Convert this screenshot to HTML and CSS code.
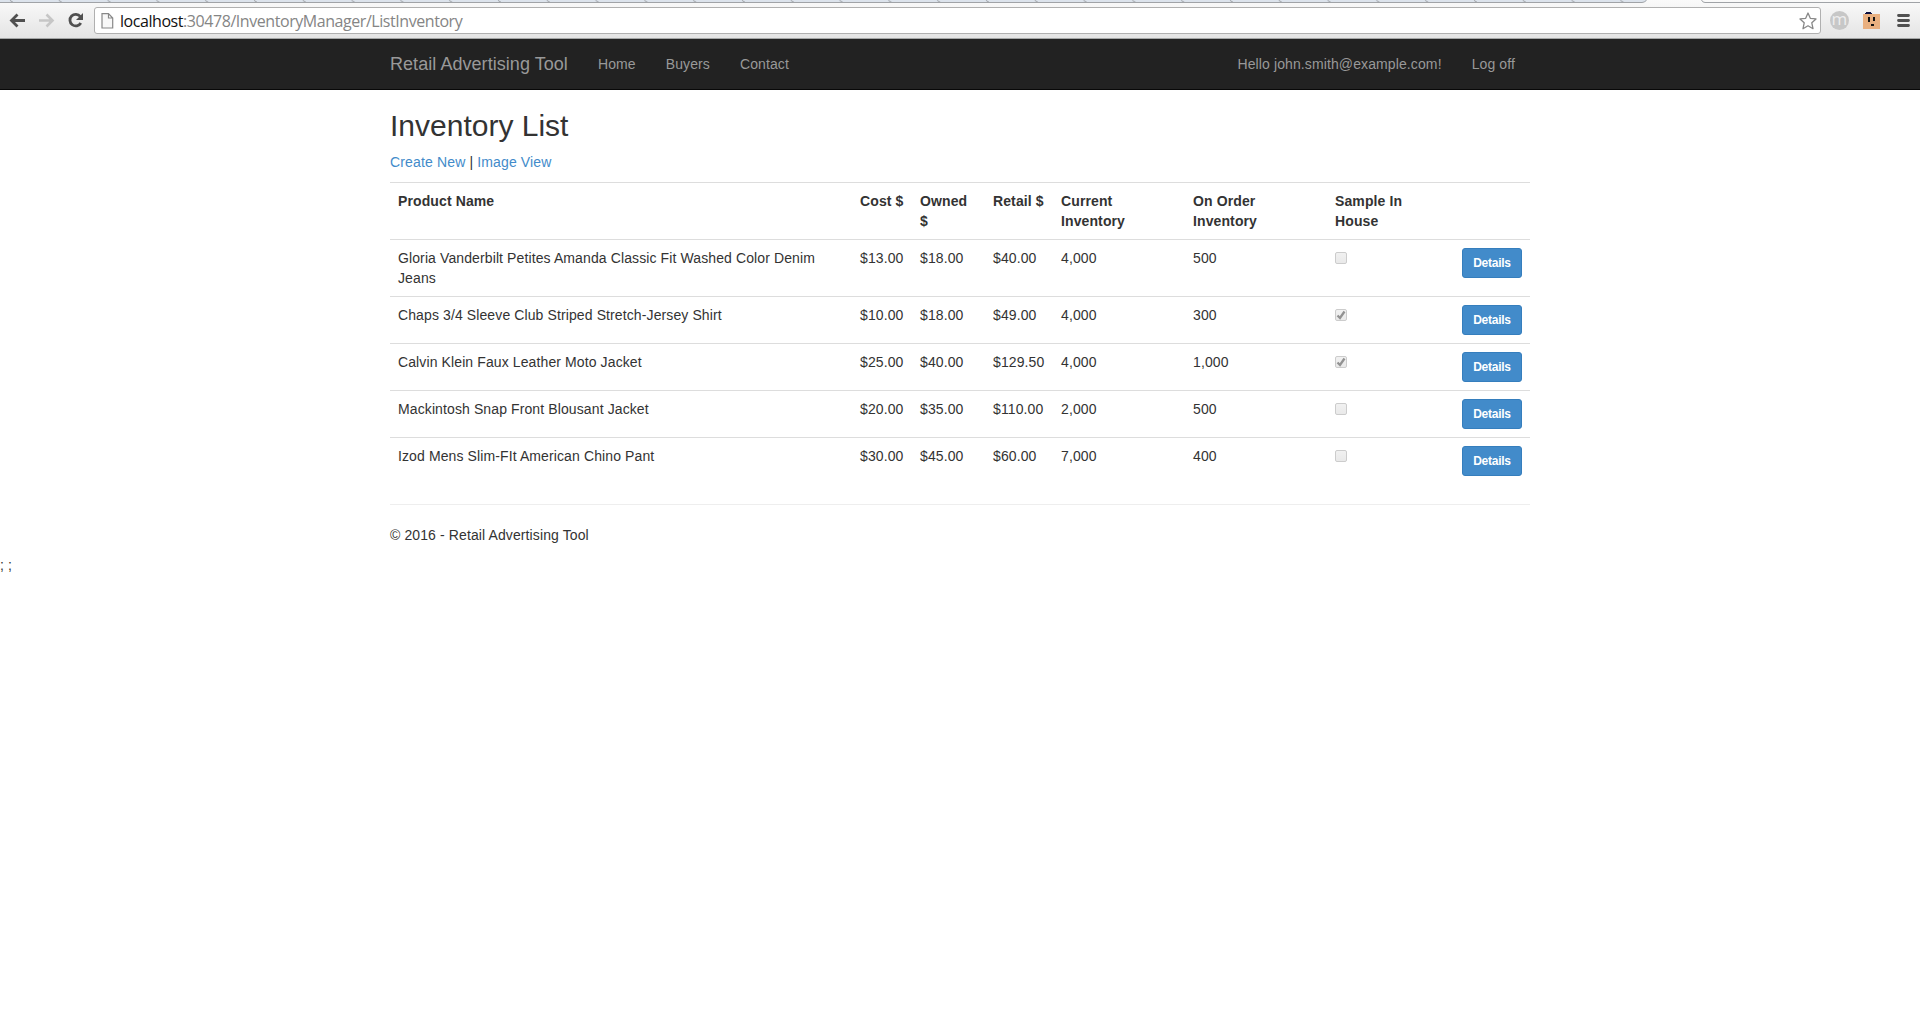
FILE: index.html
```
<!DOCTYPE html>
<html lang="en">
<head>
<meta charset="utf-8">
<title>Inventory List</title>
<link rel="stylesheet" href="styles.css">
</head>
<body>
<header class="browser">
  <svg class="tabs" width="1920" height="8" viewBox="0 0 1920 8">
    <defs><pattern id="tab" x="13" width="48.8" height="8" patternUnits="userSpaceOnUse"><path d="M46 0q1 2 4 2" fill="none" stroke="#a5a9ae"/></pattern></defs>
    <path d="M0 0H1646V2H0z" fill="#dce3ec"/>
    <path d="M0 0H1646V2H0z" fill="url(#tab)"/>
    <path d="M0 2.5H1642Q1645 2.500 1646.500 0M1701.500 0Q1702.500 2.500 1705 2.500H1920" fill="none" stroke="#a0a3a7"/>
  </svg>
  <div class="toolbar">
    <svg class="nav-icon" width="90" height="28" viewBox="0 0 90 28">
      <path d="M25 13.500H12M17.500 7.500L11.500 13.500L17.500 19.500" fill="none" stroke="#505050" stroke-width="2.800"/>
      <path d="M39 13.500H52M46.500 7.500L52.500 13.500L46.500 19.500" fill="none" stroke="#c6c6c6" stroke-width="2.600"/>
      <path d="M80.300 9.500A5.800 5.800 0 1 0 80.800 16" fill="none" stroke="#505050" stroke-width="2.800"/>
      <path d="M83 6V13H76z" fill="#505050"/>
    </svg>
    <div class="address">
      <svg width="13" height="16" viewBox="0 0 13 16"><path d="M1 .7H7.500L11.700 5V15H1zM7.500 .7V5H11.700" fill="#f8f8f8" stroke="#888" stroke-width="1.200"/></svg>
      <span class="url"><b>localhost</b>:30478/InventoryManager/ListInventory</span>
      <svg class="star" width="18" height="18" viewBox="0 0 18 18"><path d="M9 1L11.300 6.300L17 6.900L12.800 10.800L14 16.700L9 13.800L4 16.700L5.200 10.800L1 6.900L6.700 6.300Z" fill="#fff" stroke="#888" stroke-width="1.300" stroke-linejoin="round"/></svg>
    </div>
    <span class="badge">m</span>
    <svg class="face" width="17" height="17" viewBox="0 0 17 17" shape-rendering="crispEdges"><path d="M0 2H17V17H0z" fill="#e9b080"/><path d="M2 1H3V0H8V1H9V2H2z" fill="#0c1040"/><path d="M5 5H7V10H5zM10 5H12V9H10zM8 12H11V14H8z" fill="#111"/></svg>
    <svg class="menu" width="13" height="13" viewBox="0 0 13 13"><path d="M1.500 1.500H11.500M1.500 6.500H11.500M1.500 11.500H11.500" stroke="#505050" stroke-width="2.800" stroke-linecap="round"/></svg>
  </div>
</header>
<nav class="navbar">
  <div class="container nav-row">
    <a class="brand">Retail Advertising Tool</a>
    <a>Home</a><a>Buyers</a><a>Contact</a>
    <a class="user">Hello john.smith@example.com!</a><a>Log off</a>
  </div>
</nav>
<main class="container">
  <h2>Inventory List</h2>
  <p><a class="link">Create New</a> | <a class="link">Image View</a></p>
  <table class="inventory">
    <colgroup><col class="c-name"><col class="c-cost"><col class="c-owned"><col class="c-retail"><col class="c-current"><col class="c-order"><col class="c-sample"><col class="c-action"></colgroup>
    <tr><th>Product Name</th><th>Cost $</th><th>Owned $</th><th>Retail $</th><th>Current<br>Inventory</th><th>On Order<br>Inventory</th><th>Sample In<br>House</th><th></th></tr>
    <tr><td>Gloria Vanderbilt Petites Amanda Classic Fit Washed Color Denim Jeans</td><td>$13.00</td><td>$18.00</td><td>$40.00</td><td>4,000</td><td>500</td><td><span class="check"></span></td><td><a class="btn">Details</a></td></tr>
    <tr><td>Chaps 3/4 Sleeve Club Striped Stretch-Jersey Shirt</td><td>$10.00</td><td>$18.00</td><td>$49.00</td><td>4,000</td><td>300</td><td><span class="check"><svg width="10" height="10" viewBox="0 0 10 10"><path d="M1.500 5.500L4 8L8.500 1.500" fill="none" stroke="#929292" stroke-width="2.300"/></svg></span></td><td><a class="btn">Details</a></td></tr>
    <tr><td>Calvin Klein Faux Leather Moto Jacket</td><td>$25.00</td><td>$40.00</td><td>$129.50</td><td>4,000</td><td>1,000</td><td><span class="check"><svg width="10" height="10" viewBox="0 0 10 10"><path d="M1.500 5.500L4 8L8.500 1.500" fill="none" stroke="#929292" stroke-width="2.300"/></svg></span></td><td><a class="btn">Details</a></td></tr>
    <tr><td>Mackintosh Snap Front Blousant Jacket</td><td>$20.00</td><td>$35.00</td><td>$110.00</td><td>2,000</td><td>500</td><td><span class="check"></span></td><td><a class="btn">Details</a></td></tr>
    <tr><td>Izod Mens Slim-FIt American Chino Pant</td><td>$30.00</td><td>$45.00</td><td>$60.00</td><td>7,000</td><td>400</td><td><span class="check"></span></td><td><a class="btn">Details</a></td></tr>
  </table>
  <hr>
  <footer>© 2016 - Retail Advertising Tool</footer>
</main>
<div class="stray">; ;</div>
</body>
</html>
```
FILE: styles.css
```
* { box-sizing: border-box; }
body { margin: 0; background: #fff; color: #333; font: 14px/20px "Liberation Sans", Arial, sans-serif; letter-spacing: .11px; }
.browser { height: 39px; display: grid; background: linear-gradient(#fafafa, #e4e4e4); border-bottom: 1px solid #a4a6a6; }
.tabs, .toolbar { grid-area: 1 / 1; }
.tabs { display: block; }
.toolbar { display: flex; align-items: flex-start; padding-top: 7px; }
.nav-icon { flex: none; margin-right: 4px; }
.address { width: 1727px; height: 27px; display: flex; align-items: center; padding: 0 3px 0 6px; background: #fff; border: 1px solid #b0b0b0; border-radius: 3px; }
.address svg { flex: none; }
.url { margin-left: 6px; font: 16px/24px "Open Sans", "Noto Sans", sans-serif; color: #858585; letter-spacing: -.44px; white-space: nowrap; }
.url b { font-weight: 400; color: #111; }
.star { margin-left: auto; }
.badge { width: 19px; height: 19px; margin: 4px 0 0 9px; border-radius: 50%; background: #c7c7c7; color: #eee; font: 17px/15px "Open Sans", sans-serif; text-align: center; }
.face { margin: 5px 0 0 14px; }
.menu { margin: 7px 0 0 17px; }
.navbar { height: 51px; background: #222; border-bottom: 1px solid #080808; }
.container { width: 1140px; margin: 0 auto; }
.nav-row { display: flex; }
.nav-row a { padding: 15px; color: #999; white-space: nowrap; }
.nav-row .brand { padding-left: 0; font-size: 18px; letter-spacing: .05px; }
.nav-row .user { margin-left: auto; }
h2 { margin: 0; padding: 19px 0 10px; font-size: 30px; font-weight: 400; line-height: 33px; letter-spacing: 0; }
p { margin: 0 0 10px; }
.link { color: #428bca; letter-spacing: .15px; }
.inventory { width: 1140px; table-layout: fixed; border-collapse: separate; border-spacing: 0; }
.c-name { width: 462px; }
.c-cost { width: 60px; }
.c-owned { width: 73px; }
.c-retail { width: 68px; }
.c-current { width: 132px; }
.c-order { width: 142px; }
.c-sample { width: 127px; }
.c-action { width: 76px; }
th, td { padding: 8px; border-top: 1px solid #ddd; text-align: left; vertical-align: top; white-space: nowrap; }
td:first-child, th:nth-child(3) { white-space: normal; }
.check { display: block; width: 12px; height: 12px; margin-top: 4px; border: 1px solid #ccc; border-radius: 2px; background: linear-gradient(#f1f1f1, #e9e9e9); }
.check svg { display: block; }
.btn { display: block; width: 60px; height: 30px; border: 1px solid #357ebd; border-radius: 3px; background: #428bca; color: #fff; font-size: 12px; font-weight: 700; line-height: 28px; text-align: center; letter-spacing: -.25px; }
hr { margin: 20px 0; border: 0; border-top: 1px solid #eee; }
.stray { margin-top: 10px; }
```
